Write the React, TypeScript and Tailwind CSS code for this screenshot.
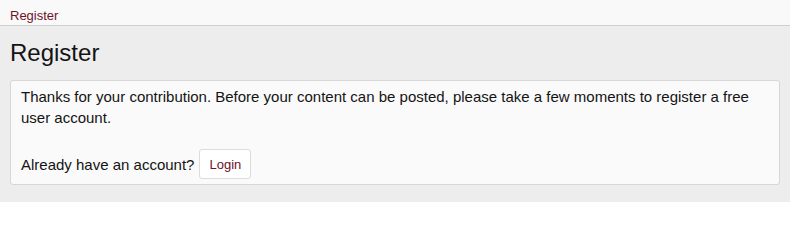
export default function App() {
  return (
    <div className="min-h-[202px] bg-[#ededed] font-['Liberation_Sans',Arial,sans-serif] text-[#141414]">
      {/* breadcrumb bar */}
      <div className="h-[26px] border-b border-[#d0d0d0] bg-[#f9f9f9] px-[10px] pt-[3px]">
        <a href="#" className="text-[13px] leading-[16px] text-[#6e1227]">
          Register
        </a>
      </div>

      <div className="px-[10px]">
        <h1 className="pt-[13px] text-[24px] leading-[28px] text-[#141414]">Register</h1>

        <div className="mt-[13px] rounded-[3px] border border-[#d6d6d6] bg-[#fafafa] px-[10px] pt-[5px] pb-[5px] text-[15px] leading-[21px]">
          <p>
            Thanks for your contribution. Before your content can be posted, please take a few
            moments to register a free user account.
          </p>
          <div className="mt-[21px] flex items-center gap-[5px]">
            <span>Already have an account?</span>
            <button className="h-[30px] rounded-[3px] border border-[#dcdcdc] bg-white px-[9px] text-[13px] text-[#6e1227]">
              Login
            </button>
          </div>
        </div>
      </div>
    </div>
  );
}
